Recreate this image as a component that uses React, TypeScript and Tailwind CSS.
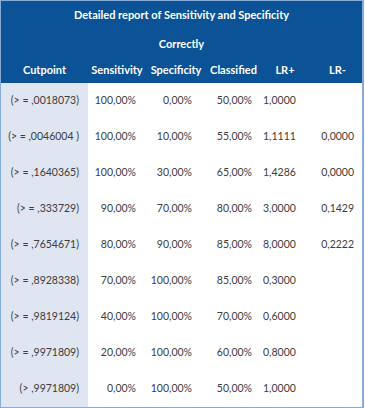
const rows = [
  ["(> = ,0018073)", "100,00%", "0,00%", "50,00%", "1,0000", ""],
  ["(> = ,0046004 )", "100,00%", "10,00%", "55,00%", "1,1111", "0,0000"],
  ["(> = ,1640365)", "100,00%", "30,00%", "65,00%", "1,4286", "0,0000"],
  ["(> = ,333729)", "90,00%", "70,00%", "80,00%", "3,0000", "0,1429"],
  ["(> = ,7654671)", "80,00%", "90,00%", "85,00%", "8,0000", "0,2222"],
  ["(> = ,8928338)", "70,00%", "100,00%", "85,00%", "0,3000", ""],
  ["(> = ,9819124)", "40,00%", "100,00%", "70,00%", "0,6000", ""],
  ["(> = ,9971809)", "20,00%", "100,00%", "60,00%", "0,8000", ""],
  ["(> ,9971809)", "0,00%", "100,00%", "50,00%", "1,0000", ""],
];

const cols = "grid grid-cols-[87px_58px_60px_55px_48px_1fr]";

export default function App() {
  return (
    <div className="h-[408px] w-[365px] bg-white font-['Lato',sans-serif]">
      <div className="w-[364px] border border-b-2 border-r-2 border-[#86acd8]">
        {/* HEADER */}
        <div className="bg-[#0b5396] text-[11px] font-bold text-white">
          <div className="flex h-[29px] items-center justify-center">
            Detailed report of Sensitivity and Specificity
          </div>
          <div className="flex h-[28px] items-center justify-center">Correctly</div>
          <div className={`${cols} h-[25px] items-center text-center`}>
            <div>Cutpoint</div>
            <div>Sensitivity</div>
            <div>Specificity</div>
            <div>Classified</div>
            <div>LR+</div>
            <div className="pl-1">LR-</div>
          </div>
        </div>
        {/* BODY */}
        <div className="text-[10.5px] text-[#3c3c3c]">
          {rows.map((r, i) => (
            <div key={i} className={`${cols} h-[36px] items-center`}>
              <div className="flex h-full items-center justify-end whitespace-pre bg-[#dfe5f1] pr-[9px]">
                {r[0]}
              </div>
              <div className="pr-[10px] text-right">{r[1]}</div>
              <div className="pr-[14px] text-right">{r[2]}</div>
              <div className="pr-[9px] text-right">{r[3]}</div>
              <div className="pl-[2px]">{r[4]}</div>
              <div className="pr-[8px] text-right">{r[5]}</div>
            </div>
          ))}
        </div>
      </div>
    </div>
  );
}
